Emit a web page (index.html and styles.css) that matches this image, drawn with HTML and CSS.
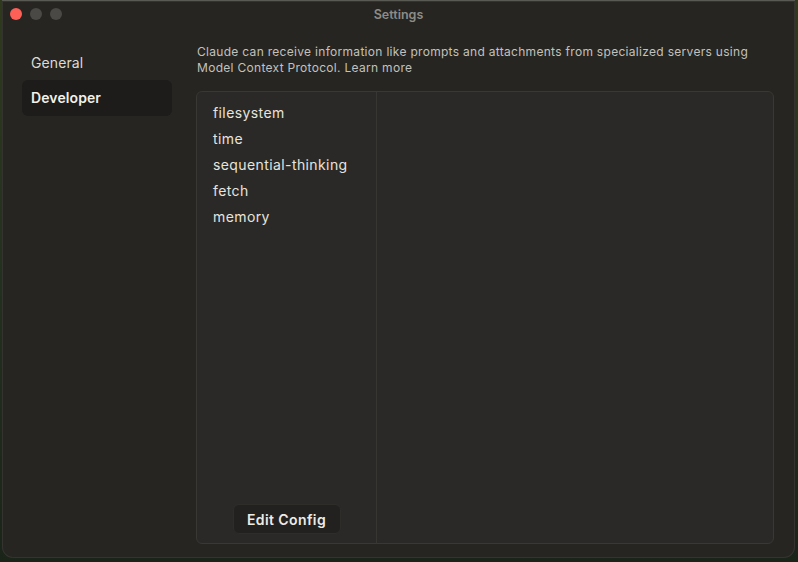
FILE: index.html
```html
<!DOCTYPE html>
<html>
<head>
<meta charset="utf-8">
<link rel="stylesheet" href="styles.css">
</head>
<body>
<div class="window">
  <div class="titlebar">
    <div class="lights">
      <span class="light red"></span>
      <span class="light"></span>
      <span class="light"></span>
    </div>
    <div class="title">Settings</div>
  </div>
  <div class="content">
    <nav class="sidebar">
      <div class="nav-item">General</div>
      <div class="nav-item active">Developer</div>
    </nav>
    <main class="main">
      <p class="desc">Claude can receive information like prompts and attachments from specialized servers using Model Context Protocol. Learn more</p>
      <div class="panel">
        <div class="servers">
          <ul class="server-list">
            <li>filesystem</li>
            <li>time</li>
            <li>sequential-thinking</li>
            <li>fetch</li>
            <li>memory</li>
          </ul>
          <button class="edit-btn">Edit Config</button>
        </div>
        <div class="detail"></div>
      </div>
    </main>
  </div>
</div>
</body>
</html>
```

FILE: styles.css
```css
* { box-sizing: border-box; }
html, body {
  margin: 0;
  height: 100%;
}
body {
  background: linear-gradient(180deg, #2f3a1c 0%, #22301f 50%, #1b2418 100%);
  padding: 0 3px 4px 2px;
  font-family: "Inter", "Lato", sans-serif;
  color: #e8e6e0;
}
.window {
  height: 558px;
  background: #262522;
  border-radius: 0 0 11px 11px;
  border-top: 1px solid #5a5a55;
  box-shadow: inset 0 0 0 1px #34332f;
  display: flex;
  flex-direction: column;
  overflow: hidden;
}
.titlebar {
  height: 27px;
  position: relative;
  display: flex;
  align-items: center;
  justify-content: center;
}
.lights {
  position: absolute;
  left: 8px;
  top: 7px;
  display: flex;
  gap: 8px;
}
.light {
  width: 12px;
  height: 12px;
  border-radius: 50%;
  background: #4a4946;
}
.light.red { background: #fe5f57; }
.title {
  font-size: 12.5px;
  font-weight: 600;
  color: #8c8b87;
  margin-top: -1px;
}
.content {
  flex: 1;
  display: flex;
  padding: 16px 21px 14px 20px;
  min-height: 0;
}
.sidebar {
  width: 150px;
  flex: none;
  display: flex;
  flex-direction: column;
}
.nav-item {
  height: 36px;
  display: flex;
  align-items: center;
  padding-left: 9px;
  font-size: 14px;
  letter-spacing: 0.1px;
  color: #dcdad4;
  border-radius: 6px;
}
.nav-item.active {
  background: #1d1c1a;
  font-weight: 600;
  color: #f2f0ea;
  padding-bottom: 1px;
}
.main {
  flex: 1;
  margin-left: 24px;
  display: flex;
  flex-direction: column;
  min-width: 0;
}
.desc {
  margin: 0 0 15px 1px;
  font-size: 12px;
  line-height: 16px;
  letter-spacing: 0.3px;
  color: #c3c1bb;
}
.panel {
  flex: 1;
  display: flex;
  background: #2a2927;
  border: 1px solid #393834;
  border-radius: 6px;
  overflow: hidden;
}
.servers {
  width: 180px;
  flex: none;
  border-right: 1px solid #373632;
  display: flex;
  flex-direction: column;
  padding: 8px 0 9px 16px;
}
.server-list {
  list-style: none;
  margin: 0;
  padding: 0;
}
.server-list li {
  height: 26px;
  line-height: 26px;
  font-size: 14px;
  letter-spacing: 0.4px;
  color: #e6e4de;
}
.edit-btn {
  margin-top: auto;
  align-self: center;
  margin-left: -16px;
  width: 108px;
  height: 30px;
  border: 1px solid #2e2d2a;
  border-radius: 6px;
  background: #222120;
  color: #ecebe6;
  font-family: inherit;
  font-size: 14px;
  font-weight: 600;
  letter-spacing: 0.4px;
  cursor: pointer;
}
.detail {
  flex: 1;
}
```
